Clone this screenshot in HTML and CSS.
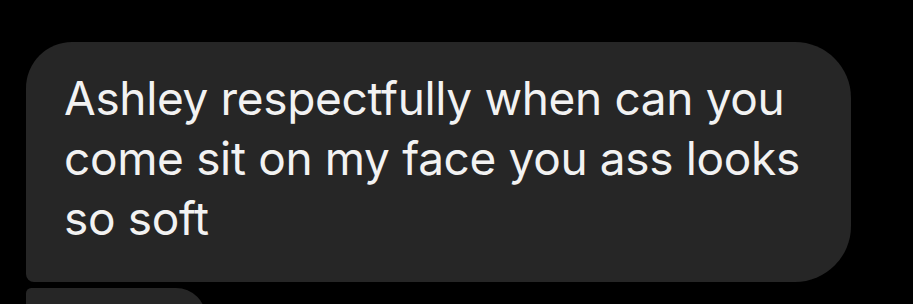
FILE: index.html
```html
<!DOCTYPE html>
<html>
<head>
<meta charset="utf-8">
<link rel="stylesheet" href="styles.css">
</head>
<body>
<div class="thread">
  <div class="bubble first">Ashley respectfully when can you<br>come sit on my face you ass looks<br>so soft</div>
  <div class="bubble next"></div>
</div>
</body>
</html>
```
FILE: styles.css
```css
html, body {
  margin: 0;
  padding: 0;
  background: #000;
  height: 100%;
  overflow: hidden;
}
.thread {
  display: flex;
  flex-direction: column;
  align-items: flex-start;
  gap: 6px;
  padding: 42px 0 0 26px;
}
.bubble {
  background: #262626;
  color: #f2f2f2;
  font-family: Inter, "Liberation Sans", sans-serif;
  font-size: 46px;
  line-height: 60px;
  letter-spacing: -0.35px;
}
.first {
  box-sizing: border-box;
  width: 825px;
  height: 240px;
  padding: 26px 10px 0 38px;
  border-radius: 46px 56px 56px 8px;
  white-space: nowrap;
}
.next {
  width: 180px;
  height: 60px;
  border-radius: 8px 46px 46px 46px;
}
```
